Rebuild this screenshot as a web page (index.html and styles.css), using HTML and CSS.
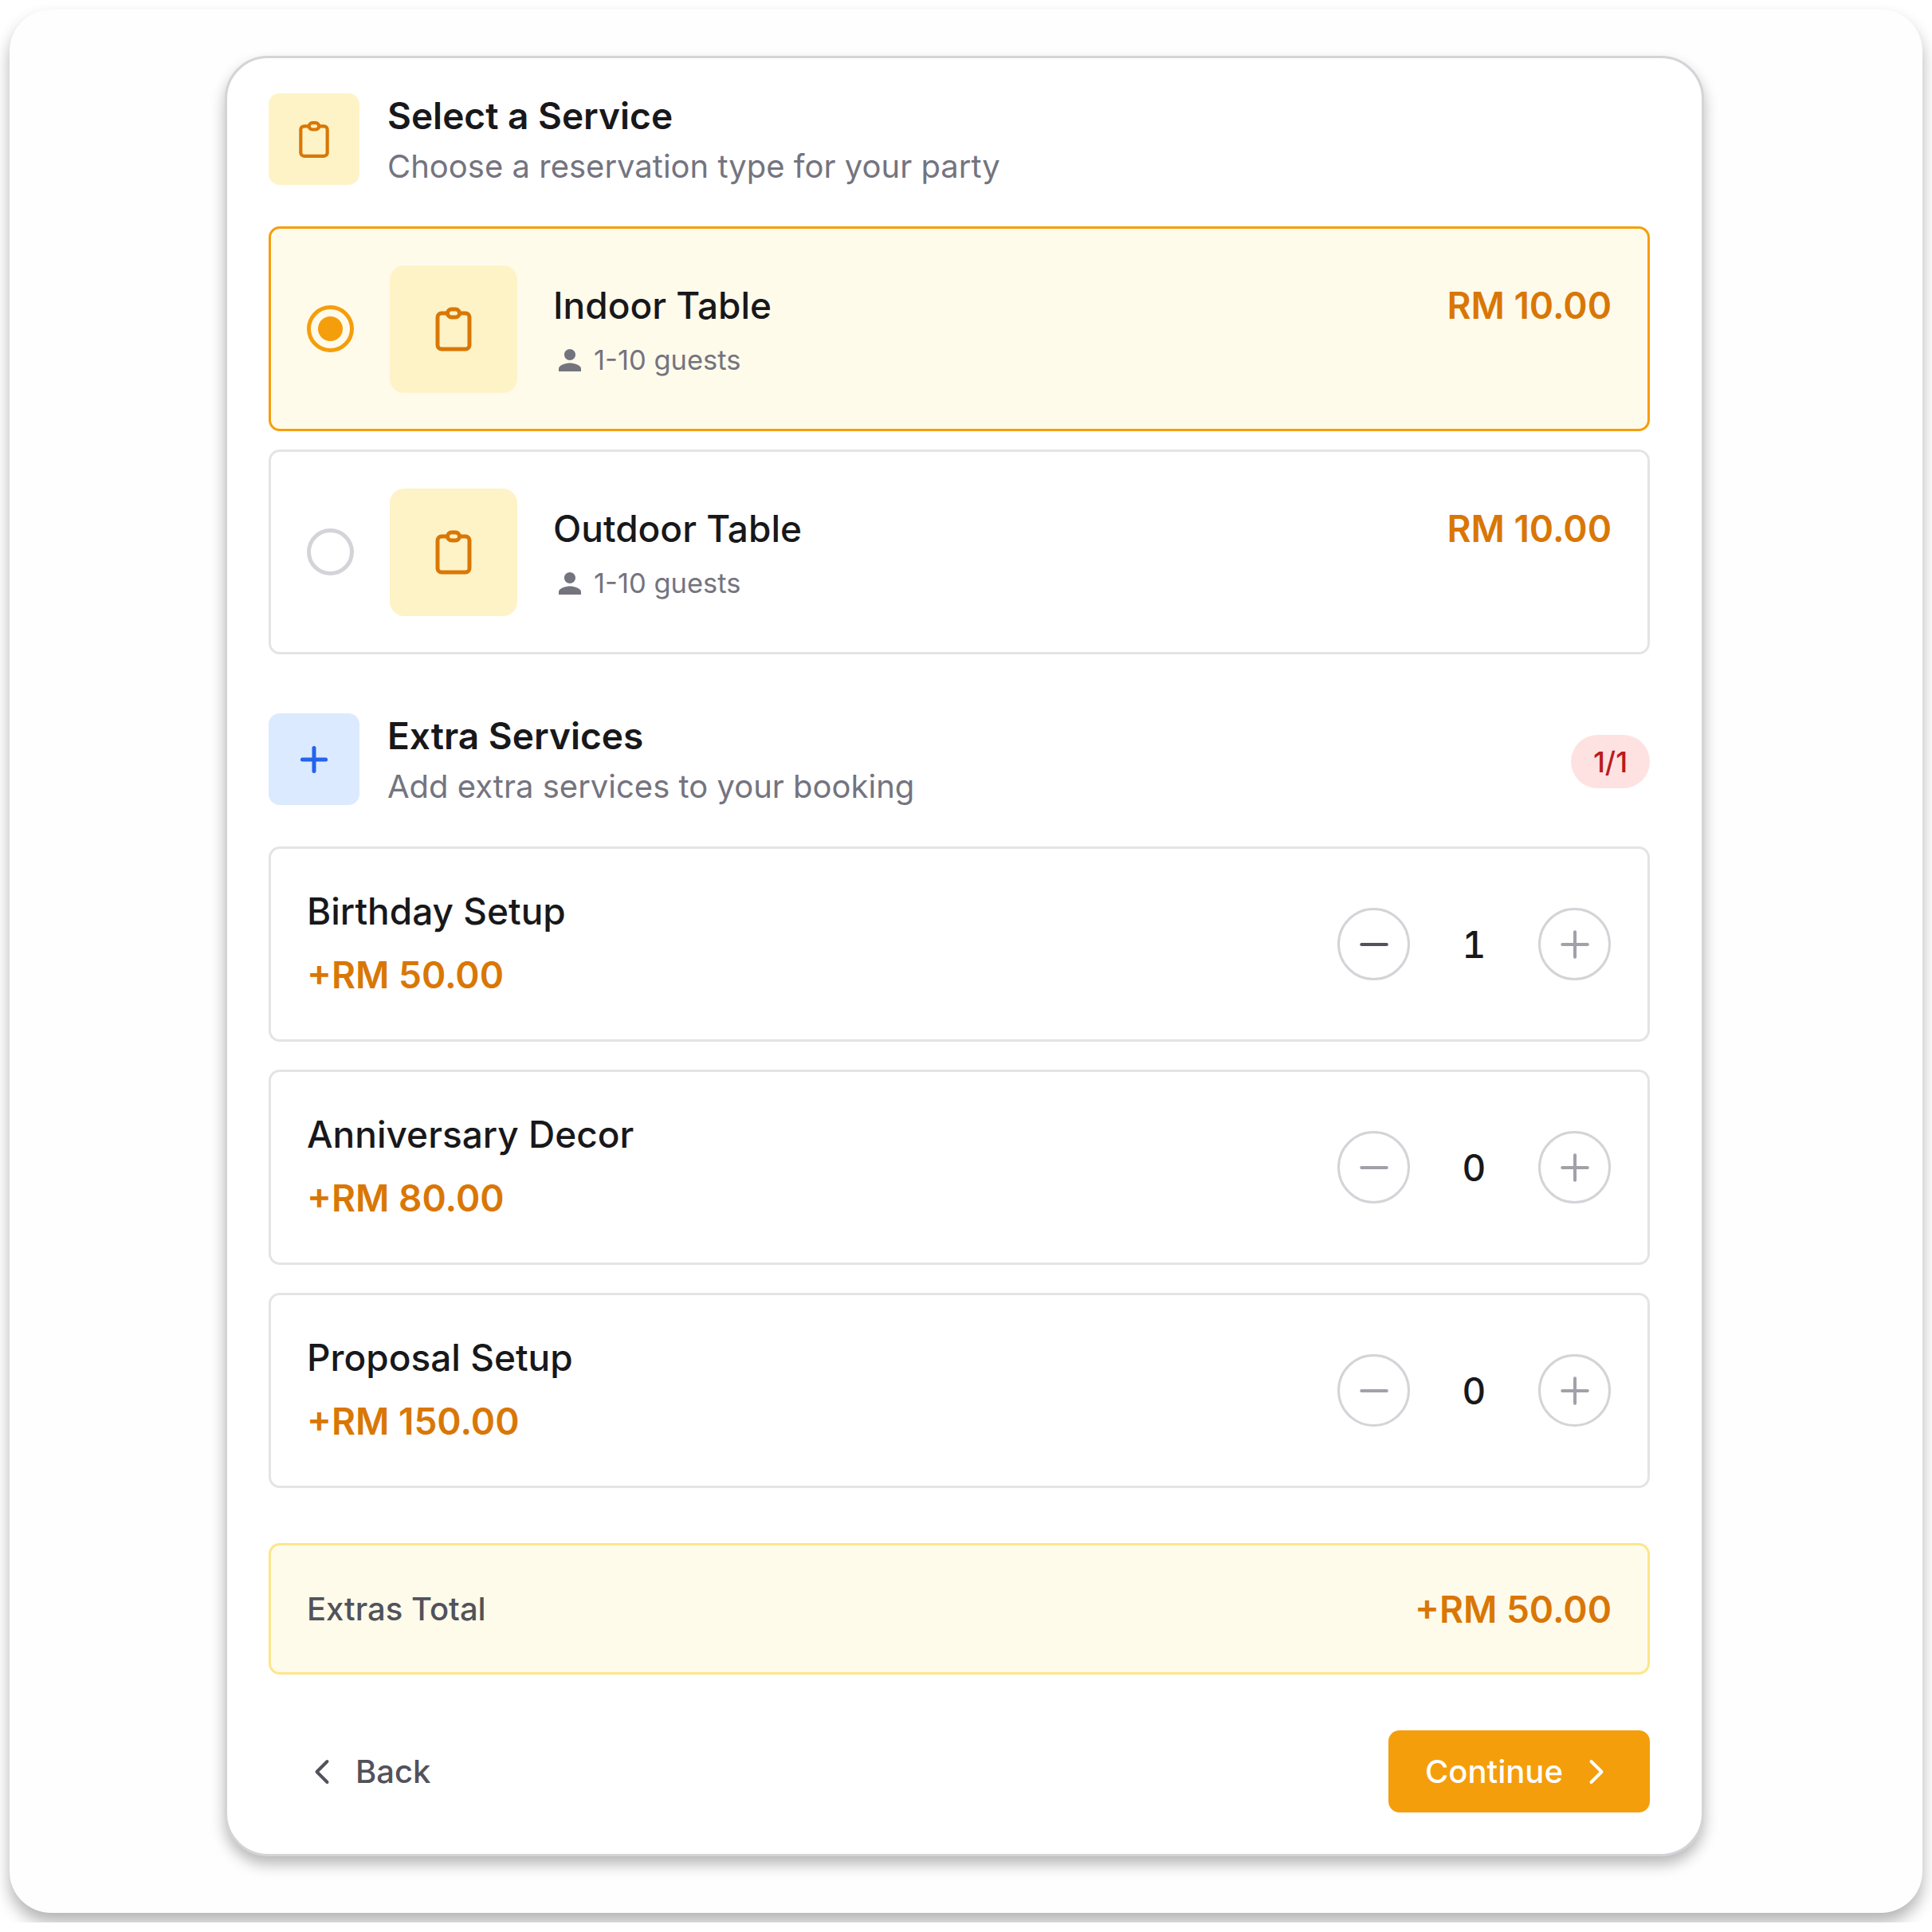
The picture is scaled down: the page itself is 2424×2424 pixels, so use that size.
FILE: index.html
```html
<!DOCTYPE html>
<html lang="en">
<head>
  <meta charset="UTF-8">
  <title>Select a Service</title>
  <link rel="stylesheet" href="styles.css">
</head>
<body>
  <div class="frame">
    <main class="card">
      <header class="section-head">
        <div class="head-icon amber">
          <svg class="clip-sm" viewBox="0 0 24 24"><rect x="9" y="2" width="6" height="4" rx="2"/><path d="M15 4h3a2 2 0 0 1 2 2v14a2 2 0 0 1-2 2H6a2 2 0 0 1-2-2V6a2 2 0 0 1 2-2h3"/></svg>
        </div>
        <div class="head-text">
          <h2>Select a Service</h2>
          <p>Choose a reservation type for your party</p>
        </div>
      </header>

      <div class="service selected">
        <span class="radio"></span>
        <div class="service-icon">
          <svg class="clip-lg" viewBox="0 0 24 24"><rect x="9" y="2" width="6" height="4" rx="2"/><path d="M15 4h3a2 2 0 0 1 2 2v14a2 2 0 0 1-2 2H6a2 2 0 0 1-2-2V6a2 2 0 0 1 2-2h3"/></svg>
        </div>
        <div class="service-info">
          <h3>Indoor Table</h3>
          <p class="guests"><svg viewBox="0 0 24 24"><path d="M12 12c2.21 0 4-1.79 4-4s-1.79-4-4-4-4 1.79-4 4 1.79 4 4 4zm0 2c-2.67 0-8 1.34-8 4v2h16v-2c0-2.66-5.33-4-8-4z"/></svg>1-10 guests</p>
        </div>
        <span class="price">RM 10.00</span>
      </div>

      <div class="service">
        <span class="radio"></span>
        <div class="service-icon">
          <svg class="clip-lg" viewBox="0 0 24 24"><rect x="9" y="2" width="6" height="4" rx="2"/><path d="M15 4h3a2 2 0 0 1 2 2v14a2 2 0 0 1-2 2H6a2 2 0 0 1-2-2V6a2 2 0 0 1 2-2h3"/></svg>
        </div>
        <div class="service-info">
          <h3>Outdoor Table</h3>
          <p class="guests"><svg viewBox="0 0 24 24"><path d="M12 12c2.21 0 4-1.79 4-4s-1.79-4-4-4-4 1.79-4 4 1.79 4 4 4zm0 2c-2.67 0-8 1.34-8 4v2h16v-2c0-2.66-5.33-4-8-4z"/></svg>1-10 guests</p>
        </div>
        <span class="price">RM 10.00</span>
      </div>

      <header class="section-head extras-head">
        <div class="head-icon blue">
          <svg class="plus-sm" viewBox="0 0 24 24"><path d="M12 5v14M5 12h14"/></svg>
        </div>
        <div class="head-text">
          <h2>Extra Services</h2>
          <p>Add extra services to your booking</p>
        </div>
        <span class="badge">1/1</span>
      </header>

      <div class="extra">
        <div class="extra-info">
          <h3>Birthday Setup</h3>
          <p class="extra-price">+RM 50.00</p>
        </div>
        <div class="stepper">
          <button class="step active"><svg viewBox="0 0 24 24"><path d="M5 12h14"/></svg></button>
          <span class="qty">1</span>
          <button class="step"><svg viewBox="0 0 24 24"><path d="M12 5v14M5 12h14"/></svg></button>
        </div>
      </div>

      <div class="extra">
        <div class="extra-info">
          <h3>Anniversary Decor</h3>
          <p class="extra-price">+RM 80.00</p>
        </div>
        <div class="stepper">
          <button class="step"><svg viewBox="0 0 24 24"><path d="M5 12h14"/></svg></button>
          <span class="qty">0</span>
          <button class="step"><svg viewBox="0 0 24 24"><path d="M12 5v14M5 12h14"/></svg></button>
        </div>
      </div>

      <div class="extra">
        <div class="extra-info">
          <h3>Proposal Setup</h3>
          <p class="extra-price">+RM 150.00</p>
        </div>
        <div class="stepper">
          <button class="step"><svg viewBox="0 0 24 24"><path d="M5 12h14"/></svg></button>
          <span class="qty">0</span>
          <button class="step"><svg viewBox="0 0 24 24"><path d="M12 5v14M5 12h14"/></svg></button>
        </div>
      </div>

      <div class="total">
        <span class="total-label">Extras Total</span>
        <span class="total-value">+RM 50.00</span>
      </div>

      <footer class="actions">
        <button class="back"><svg viewBox="0 0 24 24"><path d="M15 18l-6-6 6-6"/></svg>Back</button>
        <button class="continue">Continue<svg viewBox="0 0 24 24"><path d="M9 18l6-6-6-6"/></svg></button>
      </footer>
    </main>
  </div>
</body>
</html>
```

FILE: styles.css
```css
* {
  box-sizing: border-box;
}
body {
  margin: 0;
  background: #fff;
  font-family: Inter, "Noto Sans", sans-serif;
  color: #18181b;
}
h2, h3, p {
  margin: 0;
}
button {
  font-family: inherit;
  border: none;
  background: none;
  padding: 0;
}
svg {
  fill: none;
  stroke: currentColor;
  stroke-linecap: round;
  stroke-linejoin: round;
  stroke-width: 2;
  flex: none;
}
.frame {
  width: 2400px;
  height: 2388px;
  margin: 12px;
  padding: 58px 274px 0 270px;
  background: #fefefe;
  border-radius: 52px;
  box-shadow: 0 12px 20px rgba(0,0,0,0.3);
}
.card {
  width: 1856px;
  height: 2259px;
  padding: 44px 65px 0 52px;
  background: #fff;
  border: 3px solid #d4d4d8;
  border-radius: 54px;
  box-shadow: 0 10px 18px rgba(0,0,0,0.28);
}
.section-head {
  display: flex;
  align-items: center;
  gap: 35px;
  height: 115px;
  margin-bottom: 52px;
}
.extras-head {
  margin-top: 74px;
}
.head-icon {
  width: 114px;
  height: 115px;
  border-radius: 14px;
  display: flex;
  align-items: center;
  justify-content: center;
}
.amber {
  background: #fef3c7;
  color: #d97706;
}
.blue {
  background: #dbeafe;
  color: #2563eb;
}
.clip-sm {
  width: 50px;
  height: 50px;
}
.plus-sm {
  width: 50px;
  height: 50px;
  stroke-width: 2.4;
}
.head-text {
  flex: 1;
  padding-top: 2px;
}
.head-text h2 {
  font-size: 46px;
  line-height: 56px;
  font-weight: 600;
}
.head-text p {
  margin-top: 11px;
  font-size: 40px;
  line-height: 50px;
  color: #74747f;
}
.service {
  display: flex;
  align-items: center;
  height: 257px;
  padding: 0 45px;
  margin-bottom: 23px;
  border: 3px solid #e4e4e7;
  border-radius: 14px;
}
.service.selected {
  background: #fffbeb;
  border-color: #f59e0b;
}
.radio {
  width: 59px;
  height: 59px;
  margin-right: 45px;
  flex: none;
  border: 5px solid #d4d4d8;
  border-radius: 50%;
}
.selected .radio {
  border-color: #f59e0b;
  background: radial-gradient(circle, #f59e0b 0 15px, transparent 16px);
}
.service-icon {
  width: 160px;
  height: 160px;
  margin-right: 45px;
  flex: none;
  border-radius: 18px;
  background: #fef3c7;
  color: #d97706;
  display: flex;
  align-items: center;
  justify-content: center;
}
.clip-lg {
  width: 60px;
  height: 60px;
}
.service-info {
  flex: 1;
  padding-top: 3px;
}
.service-info h3, .extra-info h3 {
  font-size: 46px;
  line-height: 56px;
  font-weight: 500;
}
.guests {
  display: flex;
  align-items: center;
  gap: 9px;
  margin-top: 19px;
  font-size: 34.5px;
  line-height: 44px;
  color: #74747f;
}
.guests svg {
  width: 42px;
  height: 42px;
  fill: currentColor;
  stroke: none;
}
.price {
  align-self: flex-start;
  margin-top: 68px;
  font-size: 46px;
  line-height: 56px;
  font-weight: 600;
  color: #d97706;
}
.badge {
  width: 99px;
  height: 67px;
  margin-top: 6px;
  border-radius: 34px;
  background: #fee2e2;
  color: #b91c1c;
  font-size: 36px;
  font-weight: 500;
  display: flex;
  align-items: center;
  justify-content: center;
}
.extra {
  display: flex;
  align-items: center;
  justify-content: space-between;
  height: 245px;
  padding: 0 46px 0 45px;
  margin-bottom: 35px;
  border: 3px solid #e4e4e7;
  border-radius: 14px;
}
.extra-info {
  padding-bottom: 4px;
}
.extra-price {
  margin-top: 24px;
  font-size: 46px;
  line-height: 56px;
  font-weight: 600;
  color: #d97706;
}
.stepper {
  display: flex;
  align-items: center;
}
.step {
  width: 91px;
  height: 91px;
  border: 3px solid #d4d4d8;
  border-radius: 50%;
  color: #a1a1aa;
  display: flex;
  align-items: center;
  justify-content: center;
}
.step svg {
  width: 54px;
  height: 54px;
  stroke-width: 1.8;
}
.step.active {
  color: #52525b;
}
.qty {
  width: 161px;
  text-align: center;
  font-size: 46px;
  font-weight: 500;
  font-variant-numeric: tabular-nums;
}
.total {
  display: flex;
  align-items: center;
  justify-content: space-between;
  height: 165px;
  margin-top: 69px;
  padding: 0 45px;
  background: #fffbeb;
  border: 3px solid #fde68a;
  border-radius: 14px;
}
.total-label {
  font-size: 40px;
  font-weight: 500;
  color: #52525b;
}
.total-value {
  font-size: 46px;
  font-weight: 600;
  color: #d97706;
}
.actions {
  display: flex;
  align-items: center;
  justify-content: space-between;
  height: 103px;
  margin-top: 70px;
}
.back {
  display: flex;
  align-items: center;
  gap: 16px;
  margin-left: 41px;
  font-size: 40px;
  font-weight: 500;
  color: #52525b;
}
.back svg, .continue svg {
  width: 52px;
  height: 52px;
  stroke-width: 1.8;
}
.continue {
  display: flex;
  align-items: center;
  gap: 16px;
  width: 328px;
  height: 103px;
  padding-left: 46px;
  border-radius: 14px;
  background: #f59e0b;
  color: #fff;
  font-size: 40px;
  font-weight: 500;
}
```
